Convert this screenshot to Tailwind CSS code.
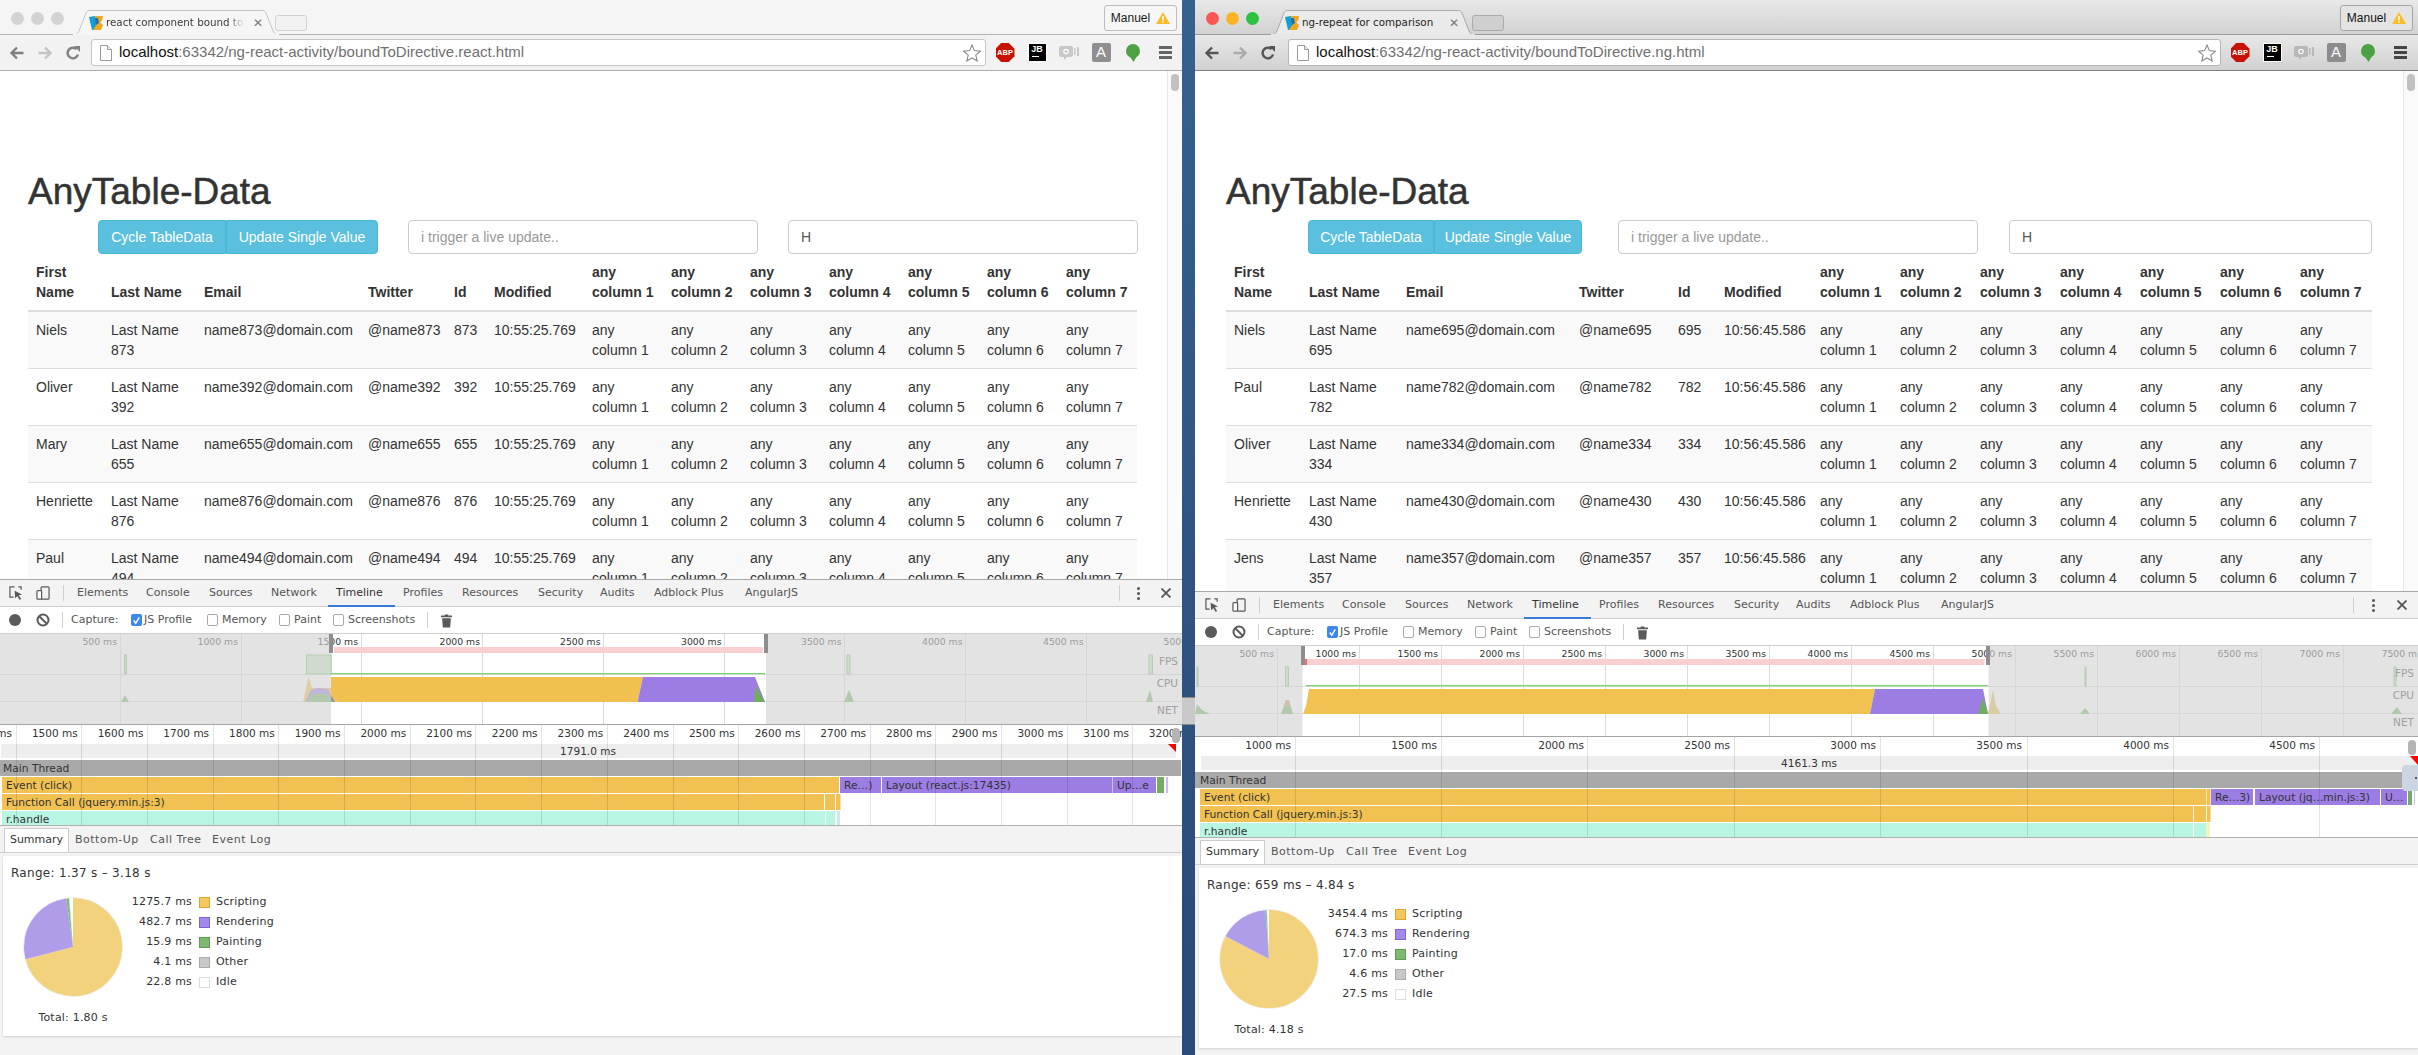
<!DOCTYPE html>
<html lang="en">
<head>
<meta charset="utf-8">
<title>Timeline comparison</title>
<script src="https://cdn.jsdelivr.net/npm/@tailwindcss/browser@4"></script>
</head>
<body class="overflow-hidden">
<svg class="absolute w-0 h-0" aria-hidden="true">
  <symbol id="fav" viewBox="0 0 14 14"><polygon points="0,1 6,0 8,7 8,13 3,14" fill="#12a0d4"/><polygon points="6,0 14,0 13,5 11,6 14,9 12,14 4,14 8,8" fill="#f0a81e"/><polygon points="6,2 9,2 10,7 7,9" fill="#1f6fb0"/></symbol>
  <symbol id="back" viewBox="0 0 16 16"><path d="M8 2.5 2.5 8 8 13.5M3 8h11.5" fill="none" stroke="currentColor" stroke-width="2.4"/></symbol>
  <symbol id="fwd" viewBox="0 0 16 16"><path d="M8 2.5 13.5 8 8 13.5M13 8H1.5" fill="none" stroke="currentColor" stroke-width="2.4"/></symbol>
  <symbol id="reload" viewBox="0 0 16 16"><path d="M13 9.5A5.3 5.3 0 1 1 11.6 4.2" fill="none" stroke="currentColor" stroke-width="2.4"/><polygon points="9,1 15,1 15,7" fill="currentColor"/></symbol>
  <symbol id="page" viewBox="0 0 12 16"><path d="M.5.5h7l4 4v11H.5z" fill="#fff" stroke="#9a9a9a"/><path d="M7.5.5v4h4" fill="#eee" stroke="#9a9a9a"/></symbol>
  <symbol id="star" viewBox="0 0 18 18"><polygon points="9,1 11.4,6.6 17.4,7.2 12.8,11.2 14.2,17 9,14 3.8,17 5.2,11.2 .6,7.2 6.6,6.6" fill="#fff" stroke="#8a8a8a" stroke-width="1.1"/></symbol>
  <symbol id="inspect" viewBox="0 0 15 15"><path d="M6 1H1v11h4" fill="none" stroke="#5a5a5a" stroke-width="1.3"/><path d="M10 1h3v3" fill="none" stroke="#5a5a5a" stroke-width="1.3"/><polygon points="6,5 14,9 10.5,10 13,14 11.5,15 9,11 6.5,13" fill="#5a5a5a"/></symbol>
  <symbol id="device" viewBox="0 0 15 15"><rect x="5.5" y="1" width="8.5" height="13" rx="1" fill="none" stroke="#5a5a5a" stroke-width="1.3"/><rect x="1" y="5" width="5" height="9" rx="1" fill="#fff" stroke="#5a5a5a" stroke-width="1.3"/></symbol>
  <symbol id="clear" viewBox="0 0 14 14"><circle cx="7" cy="7" r="5.5" fill="none" stroke="#5a5a5a" stroke-width="2"/><path d="M3 3l8 8" stroke="#5a5a5a" stroke-width="2"/></symbol>
  <symbol id="trash" viewBox="0 0 12 15"><path d="M4 1h4v1h4v2H0V2h4z" fill="#5a5a5a"/><path d="M1.2 5h9.6L10 15H2z" fill="#5a5a5a"/></symbol>
  <symbol id="warn" viewBox="0 0 14 12"><polygon points="7,0 14,12 0,12" fill="#fbbc2b"/><rect x="6.3" y="4" width="1.4" height="4.5" fill="#fff"/><rect x="6.3" y="9.4" width="1.4" height="1.4" fill="#fff"/></symbol>
  <symbol id="check" viewBox="0 0 12 12"><path d="M3 6l2.2 3L9 2.5" fill="none" stroke="#fff" stroke-width="1.6"/></symbol>
  <symbol id="balloon" viewBox="0 0 14 18"><circle cx="7" cy="7" r="7" fill="#4aa245"/><polygon points="3.500,12 11,12 7.500,18" fill="#4aa245"/></symbol>
  <symbol id="chat" viewBox="0 0 20 16"><path d="M2 1h10a2 2 0 0 1 2 2v7a2 2 0 0 1-2 2H8l-3 3v-3H2a2 2 0 0 1-2-2V3a2 2 0 0 1 2-2z" fill="currentColor"/><rect x="15" y="3" width="1.500" height="7" fill="currentColor"/><rect x="18" y="2" width="2" height="9" fill="currentColor"/><circle cx="7" cy="6.500" r="2.200" fill="none" stroke="#fff" stroke-width="1.200"/></symbol>
</svg>

<div class="flex w-[2418px] h-[1055px] bg-gradient-to-b from-[#35608f] to-[#2a4a78] font-['DejaVu_Sans',sans-serif]">

<!-- LEFT WINDOW -->
<div class="flex flex-col w-[1182px] h-full shrink-0 bg-white">
  <div class="flex items-end h-[35px] shrink-0 bg-[#f5f5f5] border-b border-[#b4b4b4]">
    <div class="flex gap-[7px] pl-[11px] w-[73px] self-start mt-[12px] shrink-0">
      <span class="w-[13px] h-[13px] rounded-full bg-[#d3d3d3]"></span><span class="w-[13px] h-[13px] rounded-full bg-[#d3d3d3]"></span><span class="w-[13px] h-[13px] rounded-full bg-[#d3d3d3]"></span>
    </div>
    <div class="relative flex items-center w-[206px] h-[25px] -mb-px pl-[16px] shrink-0">
      <svg class="absolute inset-0 w-full h-full" viewBox="0 0 206 25" preserveAspectRatio="none"><path d="M0 25c4 0 5-2 6-4L13 3c1-2 2-2.500 4-2.500h172c2 0 3 .5 4 2.500l7 18c1 2 2 4 6 4z" fill="#f6f6f6" stroke="#c4c4c4"/><path d="M0 24.500h206" stroke="#f6f6f6"/></svg>
      <svg class="relative w-[14px] h-[14px] shrink-0"><use href="#fav"/></svg>
      <span class="relative ml-[3px] w-[143px] whitespace-nowrap text-[10.300px] text-[#3a3a3a] [mask-image:linear-gradient(to_right,#000_85%,transparent_97%)]">react component bound to</span>
      <span class="relative ml-[4px] text-[12px] text-[#777]">✕</span>
    </div>
    <div class="w-[32px] h-[16px] mb-[3px] -ml-[4px] rounded-[3px] bg-[#f2f2f2] border border-[#d2d2d2] shrink-0"></div>
    <div class="flex items-center justify-center gap-[6px] ml-auto self-start mt-[5px] mr-[5px] w-[73px] h-[26px] rounded-[3px] border border-[#bdbdbd] bg-[#f6f6f6] font-['Liberation_Sans',sans-serif] text-[12px] text-[#1a1a1a]">
      <span>Manuel</span><svg class="w-[14px] h-[12px]"><use href="#warn"/></svg>
    </div>
  </div>
  <div class="flex items-center h-[36px] shrink-0 bg-[#f2f2f2] border-b border-[#ababab] pl-[3px]">
    <div class="flex justify-center w-[28px] text-[#808080]"><svg class="w-[16px] h-[16px]"><use href="#back"/></svg></div>
    <div class="flex justify-center w-[28px] text-[#c4c4c4]"><svg class="w-[16px] h-[16px]"><use href="#fwd"/></svg></div>
    <div class="flex justify-center w-[28px] text-[#808080]"><svg class="w-[16px] h-[16px]"><use href="#reload"/></svg></div>
    <div class="flex items-center w-[895px] h-[27px] ml-[4px] pl-[8px] pr-[4px] bg-white rounded-[3px] border border-[#c6c6c6] font-['Liberation_Sans',sans-serif] text-[15px]">
      <svg class="w-[12px] h-[16px] shrink-0"><use href="#page"/></svg>
      <span class="ml-[7px] text-[#111]">localhost</span><span class="text-[#707070]">:63342/ng-react-activity/boundToDirective.react.html</span>
      <svg class="ml-auto w-[18px] h-[18px]"><use href="#star"/></svg>
    </div>
    <div class="flex items-center ml-[3px]">
      <div class="flex justify-center w-[32px]"><span class="flex items-center justify-center w-[19px] h-[19px] bg-[#c81200] [clip-path:polygon(30%_0,70%_0,100%_30%,100%_70%,70%_100%,30%_100%,0_70%,0_30%)] text-white text-[7.500px] font-bold font-['Liberation_Sans',sans-serif]">ABP</span></div>
      <div class="flex justify-center w-[32px]"><span class="flex flex-col items-center justify-start w-[19px] h-[19px] bg-black border border-white text-white text-[9px] leading-[11px] font-bold font-['Liberation_Sans',sans-serif]">JB<i class="block w-[7px] h-px mt-[1px] -ml-[4px] bg-white"></i></span></div>
      <div class="flex justify-center w-[32px] text-[#c8c8c8]"><svg class="w-[20px] h-[16px]"><use href="#chat"/></svg></div>
      <div class="flex justify-center w-[32px]"><span class="flex items-center justify-center w-[19px] h-[19px] rounded-[2px] bg-[#8f8f8f] text-white text-[15px] font-['Liberation_Sans',sans-serif]">A</span></div>
      <div class="flex justify-center w-[32px]"><svg class="w-[14px] h-[18px]"><use href="#balloon"/></svg></div>
      <div class="flex flex-col items-center gap-[2px] w-[32px]"><i class="block w-[13px] h-[3px] bg-[#666]"></i><i class="block w-[13px] h-[3px] bg-[#666]"></i><i class="block w-[13px] h-[3px] bg-[#666]"></i></div>
    </div>
  </div>
  <div class="flex flex-1 min-h-0 overflow-hidden font-['Liberation_Sans',Arial,sans-serif] text-[14px] text-[#333]">
    <div class="flex-1 min-w-0 pl-[28px]">
      <h1 class="mt-[101px] mb-[8px] h-[40px] text-[37px] leading-[40px] font-medium text-[#333] [-webkit-text-stroke:0.5px_#333]">AnyTable-Data</h1>
      <div class="flex h-[34px]">
        <button class="ml-[70px] w-[128px] rounded-l-[4px] bg-[#5bc0de] border border-[#46b8da] text-white">Cycle TableData</button>
        <button class="w-[152px] rounded-r-[4px] bg-[#5bc0de] border border-[#46b8da] text-white">Update Single Value</button>
        <div class="flex items-center ml-[30px] w-[350px] px-[12px] rounded-[4px] border border-[#ccc] text-[#999]">i trigger a live update..</div>
        <div class="flex items-center ml-[30px] w-[350px] px-[12px] rounded-[4px] border border-[#ccc] text-[#555]">H</div>
      </div>
      <table class="table-fixed w-[1109px] leading-[20px] [&_th]:p-2 [&_th]:text-left [&_th]:align-bottom [&_th]:font-bold [&_th]:border-b-2 [&_th]:border-[#ddd] [&_td]:p-2 [&_td]:align-top [&_td]:border-t [&_td]:border-[#ddd] [&_tbody_tr:nth-child(odd)]:bg-[#f9f9f9]">
        <colgroup><col class="w-[75px]"><col class="w-[93px]"><col class="w-[164px]"><col class="w-[86px]"><col class="w-[40px]"><col class="w-[98px]"><col class="w-[79px]"><col class="w-[79px]"><col class="w-[79px]"><col class="w-[79px]"><col class="w-[79px]"><col class="w-[79px]"><col class="w-[79px]"></colgroup>
        <thead><tr><th>First Name</th><th>Last Name</th><th>Email</th><th>Twitter</th><th>Id</th><th>Modified</th><th>any column 1</th><th>any column 2</th><th>any column 3</th><th>any column 4</th><th>any column 5</th><th>any column 6</th><th>any column 7</th></tr></thead>
        <tbody>
          <tr><td>Niels</td><td>Last Name 873</td><td>name873@domain.com</td><td>@name873</td><td>873</td><td>10:55:25.769</td><td>any column 1</td><td>any column 2</td><td>any column 3</td><td>any column 4</td><td>any column 5</td><td>any column 6</td><td>any column 7</td></tr>
          <tr><td>Oliver</td><td>Last Name 392</td><td>name392@domain.com</td><td>@name392</td><td>392</td><td>10:55:25.769</td><td>any column 1</td><td>any column 2</td><td>any column 3</td><td>any column 4</td><td>any column 5</td><td>any column 6</td><td>any column 7</td></tr>
          <tr><td>Mary</td><td>Last Name 655</td><td>name655@domain.com</td><td>@name655</td><td>655</td><td>10:55:25.769</td><td>any column 1</td><td>any column 2</td><td>any column 3</td><td>any column 4</td><td>any column 5</td><td>any column 6</td><td>any column 7</td></tr>
          <tr><td>Henriette</td><td>Last Name 876</td><td>name876@domain.com</td><td>@name876</td><td>876</td><td>10:55:25.769</td><td>any column 1</td><td>any column 2</td><td>any column 3</td><td>any column 4</td><td>any column 5</td><td>any column 6</td><td>any column 7</td></tr>
          <tr><td>Paul</td><td>Last Name 494</td><td>name494@domain.com</td><td>@name494</td><td>494</td><td>10:55:25.769</td><td>any column 1</td><td>any column 2</td><td>any column 3</td><td>any column 4</td><td>any column 5</td><td>any column 6</td><td>any column 7</td></tr>
        </tbody>
      </table>
    </div>
    <div class="relative w-[15px] shrink-0 bg-[#fafafa] border-l border-[#e8e8e8]"><div class="w-[8px] h-[17px] ml-[3px] mt-[3px] rounded-full bg-[#c1c1c1]"></div></div>
  </div>
  <div class="h-[476px] shrink-0 bg-[#f3f3f3] border-t border-[#a8a8a8] text-[11px] text-[#555]">
    <div class="flex items-center h-[27px] border-b border-[#cfcfcf]">
      <svg class="ml-[9px] w-[14px] h-[14px]"><use href="#inspect"/></svg>
      <svg class="ml-[13px] w-[14px] h-[14px]"><use href="#device"/></svg>
      <i class="block ml-[13px] w-px h-[16px] bg-[#cfcfcf]"></i>
      <span class="ml-[13px] w-[69px]">Elements</span><span class="w-[63px]">Console</span><span class="w-[62px]">Sources</span><span class="w-[65px]">Network</span>
      <span class="relative w-[67px] h-full flex items-center text-[#333]">Timeline<i class="absolute left-[-8px] w-[67px] bottom-[-1px] h-[2px] bg-[#3879d9]"></i></span>
      <span class="w-[59px]">Profiles</span><span class="w-[76px]">Resources</span><span class="w-[62px]">Security</span><span class="w-[54px]">Audits</span><span class="w-[91px]">Adblock Plus</span><span>AngularJS</span>
      <i class="block ml-auto w-px h-[16px] bg-[#cfcfcf]"></i>
      <span class="ml-[17px] flex flex-col gap-[2px]"><i class="block w-[3px] h-[3px] rounded-full bg-[#555]"></i><i class="block w-[3px] h-[3px] rounded-full bg-[#555]"></i><i class="block w-[3px] h-[3px] rounded-full bg-[#555]"></i></span>
      <svg class="ml-[21px] mr-[11px] w-[10px] h-[10px]" viewBox="0 0 10 10"><path d="M.5.5l9 9M9.500.5l-9 9" stroke="#555" stroke-width="1.800"/></svg>
    </div>
    <div class="flex items-center h-[27px] bg-white border-b border-[#cfcfcf]">
      <span class="ml-[9px] w-[12px] h-[12px] rounded-full bg-[#5a5a5a]"></span>
      <svg class="ml-[15px] w-[14px] h-[14px]"><use href="#clear"/></svg>
      <i class="block ml-[12px] w-px h-[16px] bg-[#cfcfcf]"></i>
      <span class="ml-[8px] w-[60px]">Capture:</span>
      <span class="flex items-center justify-center w-[11px] h-[12px] rounded-[2px] bg-[#3b86f0]"><svg class="w-[11px] h-[11px]"><use href="#check"/></svg></span><span class="ml-[2px] w-[63px]">JS Profile</span>
      <span class="w-[11px] h-[12px] rounded-[2px] bg-white border border-[#aaa]"></span><span class="ml-[4px] w-[57px]">Memory</span>
      <span class="w-[11px] h-[12px] rounded-[2px] bg-white border border-[#aaa]"></span><span class="ml-[4px] w-[39px]">Paint</span>
      <span class="w-[11px] h-[12px] rounded-[2px] bg-white border border-[#aaa]"></span><span class="ml-[4px] w-[79px]">Screenshots</span>
      <i class="block w-px h-[16px] bg-[#cfcfcf]"></i>
      <svg class="ml-[13px] w-[11px] h-[15px]"><use href="#trash"/></svg>
    </div>
    <svg class="block w-[1182px] h-[90px] bg-white" viewBox="0 0 1182 90">
      <g stroke="#dcdcdc"><path d="M120.500 0v90M241.500 0v90M361.500 0v90M482.500 0v90M603.500 0v90M724.500 0v90M844.500 0v90M965.500 0v90M1086.500 0v90M0 40.500h1182M0 67.500h331M766 40.500h416M766 67.500h416"/></g>
      <g text-anchor="end" class="text-[9.300px] fill-[#333]"><text x="117" y="11">500 ms</text><text x="238" y="11">1000 ms</text><text x="358" y="11">1500 ms</text><text x="480" y="11">2000 ms</text><text x="600.500" y="11">2500 ms</text><text x="721.500" y="11">3000 ms</text><text x="841.500" y="11">3500 ms</text><text x="962.500" y="11">4000 ms</text><text x="1083.500" y="11">4500 ms</text><text x="1204" y="11">5000 ms</text></g>
      <rect x="334" y="13" width="429" height="6" fill="#f9cfcf"/>
      <path d="M331 39.700h434" stroke="#7fd077" stroke-width="1.200"/>
      <g fill="#c9e6c4" stroke="#7fc877"><rect x="124.500" y="21" width="2" height="19"/><rect x="306.500" y="21" width="24.500" height="19"/><rect x="847" y="21" width="3" height="19"/><rect x="1149" y="21" width="3.500" height="19"/></g>
      <polygon points="121,68 125,61 129,68" fill="#79b86e"/>
      <polygon points="303,68 308.500,43 312,54 332,54 336,68" fill="#f0c050"/><polygon points="305,68 311,56 318,54 328,55 335,68" fill="#9b7de4"/><polygon points="306,68 312,60 328,60 334,68" fill="#79b86e"/>
      <polygon points="844,68 849,56 854,68" fill="#79b86e"/><polygon points="1146,68 1150,56 1153,68" fill="#79b86e"/>
      <rect x="0" y="0" width="331" height="90" fill="#d3d3d3" opacity=".64"/><rect x="766" y="0" width="416" height="90" fill="#d3d3d3" opacity=".64"/>
      <polygon points="331,43 643,43 637.500,68 337,68 331,62" fill="#f0c050"/>
      <polygon points="643,43 755,43 765,68 637.500,68" fill="#9b7de4"/>
      <polygon points="754,68 756,52 765,68" fill="#6fae5c"/>
      <rect x="329" y="0" width="4" height="19" fill="#8e8e8e"/><rect x="764" y="0" width="4" height="19" fill="#8e8e8e"/>
      <g text-anchor="end" class="text-[10.500px] fill-[#a0a0a0]"><text x="1178" y="31">FPS</text><text x="1178" y="53">CPU</text><text x="1178" y="80">NET</text></g>
    </svg>
    <div class="h-px bg-[#a5a5a5]"></div>
    <svg class="block w-[1182px] h-[100px] bg-white" viewBox="0 0 1182 100">
      <g text-anchor="end" class="text-[10.500px] fill-[#333]"><text x="12" y="12">1400 ms</text><text x="77.700" y="12">1500 ms</text><text x="143.400" y="12">1600 ms</text><text x="209.100" y="12">1700 ms</text><text x="274.800" y="12">1800 ms</text><text x="340.500" y="12">1900 ms</text><text x="406.200" y="12">2000 ms</text><text x="471.900" y="12">2100 ms</text><text x="537.600" y="12">2200 ms</text><text x="603.300" y="12">2300 ms</text><text x="669" y="12">2400 ms</text><text x="734.700" y="12">2500 ms</text><text x="800.400" y="12">2600 ms</text><text x="866.100" y="12">2700 ms</text><text x="931.800" y="12">2800 ms</text><text x="997.500" y="12">2900 ms</text><text x="1063.200" y="12">3000 ms</text><text x="1128.900" y="12">3100 ms</text><text x="1194.600" y="12">3200 ms</text></g>
      <rect x="1" y="19" width="1175" height="14" fill="#eeeeee"/>
      <text x="588" y="30" text-anchor="middle" class="text-[10.500px] fill-[#333]">1791.0 ms</text>
      <rect x="0" y="35" width="1181" height="16" fill="#a9a9a9"/>
      <rect x="2" y="52" width="837" height="16" fill="#f1c152"/>
      <rect x="840" y="52" width="41" height="16" fill="#9b7de4"/><rect x="882" y="52" width="230.500" height="16" fill="#9b7de4"/><rect x="1113" y="52" width="43" height="16" fill="#9b7de4"/><rect x="1157" y="52" width="7" height="16" fill="#74ad62"/><rect x="1166" y="52" width="2" height="16" fill="#c9bdf0"/>
      <rect x="2" y="69" width="838.500" height="16" fill="#f1c152"/><path d="M824.500 69v16M835.500 69v16" stroke="#fff"/>
      <rect x="2" y="86" width="833" height="14" fill="#b8f5e3"/><rect x="837" y="86" width="3" height="14" fill="#c9ebf0"/><path d="M825.500 86v14" stroke="#fff"/>
      <g class="text-[10.700px] fill-[#333]"><text x="3" y="47">Main Thread</text><text x="6" y="64">Event (click)</text><text x="6" y="81">Function Call (jquery.min.js:3)</text><text x="6" y="98">r.handle</text><text x="844" y="64">Re…)</text><text x="886" y="64">Layout (react.js:17435)</text><text x="1117" y="64">Up…e</text></g>
      <path d="M16.500 0v100M81.500 0v100M147.500 0v100M213.500 0v100M278.500 0v100M344.500 0v100M410.500 0v100M475.500 0v100M541.500 0v100M607.500 0v100M673.500 0v100M738.500 0v100M804.500 0v100M870.500 0v100M935.500 0v100M1001.500 0v100M1067.500 0v100M1132.500 0v100" stroke="#000" stroke-opacity=".11"/>
      <polygon points="1168,19 1176,19 1176,27" fill="#f00"/>
      <rect x="1172" y="3" width="8" height="15" rx="4" fill="#b4b4b4"/>
    </svg>
    <div class="h-px bg-[#b0b0b0]"></div>
    <div class="flex items-end h-[26px] pl-[4px] text-[#555]">
      <span class="flex items-center justify-center w-[65px] h-[24px] bg-white border-x border-t border-[#ccc] text-[#333]">Summary</span>
      <span class="flex items-center ml-[6px] w-[75px] h-[24px] tracking-[.5px]">Bottom-Up</span><span class="flex items-center w-[62px] h-[24px] tracking-[.5px]">Call Tree</span><span class="flex items-center h-[24px] tracking-[.5px]">Event Log</span>
    </div>
    <div class="h-px bg-[#cfcfcf]"></div>
    <div class="ml-[3px] mt-[3px] h-[180px] bg-white shadow-[0_1px_2px_rgba(0,0,0,.15)] text-[#333] tracking-[.2px]">
      <div class="flex items-center h-[34px] pl-[8px] text-[12px] tracking-[.3px]">Range: 1.37 s – 3.18 s</div>
      <div class="flex items-start ml-[20px] mt-[2px]">
        <div class="w-[100px] mt-[5px] text-center">
          <svg class="block w-[100px] h-[100px]" viewBox="0 0 100 100"><circle cx="50" cy="50" r="49.500" fill="#fff" stroke="#eee"/><g fill="none" stroke-width="49" transform="rotate(-90 50 50)"><circle cx="50" cy="50" r="24.500" pathLength="100" stroke="#f3d27d" stroke-dasharray="70.900 100"/><circle cx="50" cy="50" r="24.500" pathLength="100" stroke="#b09dea" stroke-dasharray="26.800 100" stroke-dashoffset="-70.900"/><circle cx="50" cy="50" r="24.500" pathLength="100" stroke="#7fbf74" stroke-dasharray=".9 100" stroke-dashoffset="-97.700"/><circle cx="50" cy="50" r="24.500" pathLength="100" stroke="#ccc" stroke-dasharray=".2 100" stroke-dashoffset="-98.600"/></g></svg>
          <div class="mt-[13px]">Total: 1.80 s</div>
        </div>
        <div>
          <div class="flex items-center h-[20px]"><span class="w-[69px] text-right">1275.7 ms</span><i class="block ml-[7px] w-[11px] h-[11px] bg-[#f3c85e] border border-[#e0a52a]"></i><span class="ml-[6px]">Scripting</span></div>
          <div class="flex items-center h-[20px]"><span class="w-[69px] text-right">482.7 ms</span><i class="block ml-[7px] w-[11px] h-[11px] bg-[#a288e8] border border-[#8062d8]"></i><span class="ml-[6px]">Rendering</span></div>
          <div class="flex items-center h-[20px]"><span class="w-[69px] text-right">15.9 ms</span><i class="block ml-[7px] w-[11px] h-[11px] bg-[#7fb871] border border-[#5f9d50]"></i><span class="ml-[6px]">Painting</span></div>
          <div class="flex items-center h-[20px]"><span class="w-[69px] text-right">4.1 ms</span><i class="block ml-[7px] w-[11px] h-[11px] bg-[#c8c8c8] border border-[#aaa]"></i><span class="ml-[6px]">Other</span></div>
          <div class="flex items-center h-[20px]"><span class="w-[69px] text-right">22.8 ms</span><i class="block ml-[7px] w-[11px] h-[11px] bg-white border border-[#ddd]"></i><span class="ml-[6px]">Idle</span></div>
        </div>
      </div>
    </div>
  </div>
</div>

<!-- DESKTOP GAP -->
<div class="flex flex-col w-[13px] shrink-0 pt-[697px]"><div class="h-[28px] bg-[#c9c9c9] border-y border-[#8c8c8c]"></div></div>

<!-- RIGHT WINDOW -->
<div class="flex flex-col w-[1223px] h-full shrink-0 bg-white">
  <div class="flex items-end h-[35px] shrink-0 bg-gradient-to-b from-[#e8e8e8] to-[#d2d2d2] border-b border-[#9a9a9a]">
    <div class="flex gap-[7px] pl-[11px] w-[76px] self-start mt-[12px] shrink-0">
      <span class="w-[13px] h-[13px] rounded-full bg-[#fc5753]"></span><span class="w-[13px] h-[13px] rounded-full bg-[#fdb327]"></span><span class="w-[13px] h-[13px] rounded-full bg-[#2cc23f]"></span>
    </div>
    <div class="relative flex items-center w-[204px] h-[25px] -mb-px pl-[14px] shrink-0">
      <svg class="absolute inset-0 w-full h-full" viewBox="0 0 206 25" preserveAspectRatio="none"><path d="M0 25c4 0 5-2 6-4L13 3c1-2 2-2.500 4-2.500h172c2 0 3 .5 4 2.500l7 18c1 2 2 4 6 4z" fill="#eaeaea" stroke="#a8a8a8"/><path d="M0 24.500h206" stroke="#e8e8e8"/></svg>
      <svg class="relative w-[14px] h-[14px] shrink-0"><use href="#fav"/></svg>
      <span class="relative ml-[3px] w-[147px] whitespace-nowrap text-[10.300px] text-[#222]">ng-repeat for comparison</span>
      <span class="relative text-[12px] text-[#777]">✕</span>
    </div>
    <div class="w-[32px] h-[16px] mb-[3px] -ml-[3px] rounded-[3px] bg-[#cfcfcf] border border-[#aaa] shrink-0"></div>
    <div class="flex items-center justify-center gap-[6px] ml-auto self-start mt-[5px] mr-[5px] w-[73px] h-[26px] rounded-[3px] border border-[#a5a5a5] bg-[#e4e4e4] font-['Liberation_Sans',sans-serif] text-[12px] text-[#111]">
      <span>Manuel</span><svg class="w-[14px] h-[12px]"><use href="#warn"/></svg>
    </div>
  </div>
  <div class="flex items-center h-[36px] shrink-0 bg-gradient-to-b from-[#e8e8e8] to-[#d1d1d1] border-b border-[#808080] pl-[3px]">
    <div class="flex justify-center w-[28px] text-[#555]"><svg class="w-[16px] h-[16px]"><use href="#back"/></svg></div>
    <div class="flex justify-center w-[28px] text-[#aaa]"><svg class="w-[16px] h-[16px]"><use href="#fwd"/></svg></div>
    <div class="flex justify-center w-[28px] text-[#555]"><svg class="w-[16px] h-[16px]"><use href="#reload"/></svg></div>
    <div class="flex items-center w-[933px] h-[27px] ml-[6px] pl-[8px] pr-[4px] bg-white rounded-[3px] border border-[#b5b5b5] font-['Liberation_Sans',sans-serif] text-[15px]">
      <svg class="w-[12px] h-[16px] shrink-0"><use href="#page"/></svg>
      <span class="ml-[7px] text-[#111]">localhost</span><span class="text-[#707070]">:63342/ng-react-activity/boundToDirective.ng.html</span>
      <svg class="ml-auto w-[18px] h-[18px]"><use href="#star"/></svg>
    </div>
    <div class="flex items-center ml-[3px]">
      <div class="flex justify-center w-[32px]"><span class="flex items-center justify-center w-[19px] h-[19px] bg-[#c81200] [clip-path:polygon(30%_0,70%_0,100%_30%,100%_70%,70%_100%,30%_100%,0_70%,0_30%)] text-white text-[7.500px] font-bold font-['Liberation_Sans',sans-serif]">ABP</span></div>
      <div class="flex justify-center w-[32px]"><span class="flex flex-col items-center justify-start w-[19px] h-[19px] bg-black border border-white text-white text-[9px] leading-[11px] font-bold font-['Liberation_Sans',sans-serif]">JB<i class="block w-[7px] h-px mt-[1px] -ml-[4px] bg-white"></i></span></div>
      <div class="flex justify-center w-[32px] text-[#b8b8b8]"><svg class="w-[20px] h-[16px]"><use href="#chat"/></svg></div>
      <div class="flex justify-center w-[32px]"><span class="flex items-center justify-center w-[19px] h-[19px] rounded-[2px] bg-[#8c8c8c] text-white text-[15px] font-['Liberation_Sans',sans-serif]">A</span></div>
      <div class="flex justify-center w-[32px]"><svg class="w-[14px] h-[18px]"><use href="#balloon"/></svg></div>
      <div class="flex flex-col items-center gap-[2px] w-[32px]"><i class="block w-[13px] h-[3px] bg-[#444]"></i><i class="block w-[13px] h-[3px] bg-[#444]"></i><i class="block w-[13px] h-[3px] bg-[#444]"></i></div>
    </div>
  </div>
  <div class="flex flex-1 min-h-0 overflow-hidden font-['Liberation_Sans',Arial,sans-serif] text-[14px] text-[#333]">
    <div class="flex-1 min-w-0 pl-[31px]">
      <h1 class="mt-[101px] mb-[8px] h-[40px] text-[37px] leading-[40px] font-medium text-[#333] [-webkit-text-stroke:0.5px_#333]">AnyTable-Data</h1>
      <div class="flex h-[34px]">
        <button class="ml-[82px] w-[126px] rounded-l-[4px] bg-[#5bc0de] border border-[#46b8da] text-white">Cycle TableData</button>
        <button class="w-[148px] rounded-r-[4px] bg-[#5bc0de] border border-[#46b8da] text-white">Update Single Value</button>
        <div class="flex items-center ml-[36px] w-[360px] px-[12px] rounded-[4px] border border-[#ccc] text-[#999]">i trigger a live update..</div>
        <div class="flex items-center ml-[31px] w-[363px] px-[12px] rounded-[4px] border border-[#ccc] text-[#555]">H</div>
      </div>
      <table class="table-fixed w-[1146px] leading-[20px] [&_th]:p-2 [&_th]:text-left [&_th]:align-bottom [&_th]:font-bold [&_th]:border-b-2 [&_th]:border-[#ddd] [&_td]:p-2 [&_td]:align-top [&_td]:border-t [&_td]:border-[#ddd] [&_tbody_tr:nth-child(odd)]:bg-[#f9f9f9]">
        <colgroup><col class="w-[75px]"><col class="w-[97px]"><col class="w-[173px]"><col class="w-[99px]"><col class="w-[46px]"><col class="w-[96px]"><col class="w-[80px]"><col class="w-[80px]"><col class="w-[80px]"><col class="w-[80px]"><col class="w-[80px]"><col class="w-[80px]"><col class="w-[80px]"></colgroup>
        <thead><tr><th>First Name</th><th>Last Name</th><th>Email</th><th>Twitter</th><th>Id</th><th>Modified</th><th>any column 1</th><th>any column 2</th><th>any column 3</th><th>any column 4</th><th>any column 5</th><th>any column 6</th><th>any column 7</th></tr></thead>
        <tbody>
          <tr><td>Niels</td><td>Last Name 695</td><td>name695@domain.com</td><td>@name695</td><td>695</td><td>10:56:45.586</td><td>any column 1</td><td>any column 2</td><td>any column 3</td><td>any column 4</td><td>any column 5</td><td>any column 6</td><td>any column 7</td></tr>
          <tr><td>Paul</td><td>Last Name 782</td><td>name782@domain.com</td><td>@name782</td><td>782</td><td>10:56:45.586</td><td>any column 1</td><td>any column 2</td><td>any column 3</td><td>any column 4</td><td>any column 5</td><td>any column 6</td><td>any column 7</td></tr>
          <tr><td>Oliver</td><td>Last Name 334</td><td>name334@domain.com</td><td>@name334</td><td>334</td><td>10:56:45.586</td><td>any column 1</td><td>any column 2</td><td>any column 3</td><td>any column 4</td><td>any column 5</td><td>any column 6</td><td>any column 7</td></tr>
          <tr><td>Henriette</td><td>Last Name 430</td><td>name430@domain.com</td><td>@name430</td><td>430</td><td>10:56:45.586</td><td>any column 1</td><td>any column 2</td><td>any column 3</td><td>any column 4</td><td>any column 5</td><td>any column 6</td><td>any column 7</td></tr>
          <tr><td>Jens</td><td>Last Name 357</td><td>name357@domain.com</td><td>@name357</td><td>357</td><td>10:56:45.586</td><td>any column 1</td><td>any column 2</td><td>any column 3</td><td>any column 4</td><td>any column 5</td><td>any column 6</td><td>any column 7</td></tr>
        </tbody>
      </table>
    </div>
    <div class="relative w-[15px] shrink-0 bg-[#fafafa] border-l border-[#e8e8e8]"><div class="w-[8px] h-[17px] ml-[3px] mt-[3px] rounded-full bg-[#c1c1c1]"></div></div>
  </div>
  <div class="h-[464px] shrink-0 bg-[#f3f3f3] border-t border-[#a8a8a8] text-[11px] text-[#555]">
    <div class="flex items-center h-[27px] border-b border-[#cfcfcf]">
      <svg class="ml-[10px] w-[14px] h-[14px]"><use href="#inspect"/></svg>
      <svg class="ml-[13px] w-[14px] h-[14px]"><use href="#device"/></svg>
      <i class="block ml-[13px] w-px h-[16px] bg-[#cfcfcf]"></i>
      <span class="ml-[13px] w-[69px]">Elements</span><span class="w-[63px]">Console</span><span class="w-[62px]">Sources</span><span class="w-[65px]">Network</span>
      <span class="relative w-[67px] h-full flex items-center text-[#333]">Timeline<i class="absolute left-[-8px] w-[67px] bottom-[-1px] h-[2px] bg-[#3879d9]"></i></span>
      <span class="w-[59px]">Profiles</span><span class="w-[76px]">Resources</span><span class="w-[62px]">Security</span><span class="w-[54px]">Audits</span><span class="w-[91px]">Adblock Plus</span><span>AngularJS</span>
      <i class="block ml-auto w-px h-[16px] bg-[#cfcfcf]"></i>
      <span class="ml-[18px] flex flex-col gap-[2px]"><i class="block w-[3px] h-[3px] rounded-full bg-[#555]"></i><i class="block w-[3px] h-[3px] rounded-full bg-[#555]"></i><i class="block w-[3px] h-[3px] rounded-full bg-[#555]"></i></span>
      <svg class="ml-[22px] mr-[11px] w-[10px] h-[10px]" viewBox="0 0 10 10"><path d="M.5.5l9 9M9.500.5l-9 9" stroke="#555" stroke-width="1.800"/></svg>
    </div>
    <div class="flex items-center h-[27px] bg-white border-b border-[#cfcfcf]">
      <span class="ml-[10px] w-[12px] h-[12px] rounded-full bg-[#5a5a5a]"></span>
      <svg class="ml-[15px] w-[14px] h-[14px]"><use href="#clear"/></svg>
      <i class="block ml-[12px] w-px h-[16px] bg-[#cfcfcf]"></i>
      <span class="ml-[8px] w-[60px]">Capture:</span>
      <span class="flex items-center justify-center w-[11px] h-[12px] rounded-[2px] bg-[#3b86f0]"><svg class="w-[11px] h-[11px]"><use href="#check"/></svg></span><span class="ml-[2px] w-[63px]">JS Profile</span>
      <span class="w-[11px] h-[12px] rounded-[2px] bg-white border border-[#aaa]"></span><span class="ml-[4px] w-[57px]">Memory</span>
      <span class="w-[11px] h-[12px] rounded-[2px] bg-white border border-[#aaa]"></span><span class="ml-[4px] w-[39px]">Paint</span>
      <span class="w-[11px] h-[12px] rounded-[2px] bg-white border border-[#aaa]"></span><span class="ml-[4px] w-[79px]">Screenshots</span>
      <i class="block w-px h-[16px] bg-[#cfcfcf]"></i>
      <svg class="ml-[13px] w-[11px] h-[15px]"><use href="#trash"/></svg>
    </div>
    <svg class="block w-[1223px] h-[90px] bg-white" viewBox="1195 0 1223 90">
      <g stroke="#dcdcdc"><path d="M1277.500 0v90M1359.500 0v90M1441.500 0v90M1523.500 0v90M1605.500 0v90M1687.500 0v90M1769.500 0v90M1851.500 0v90M1933.500 0v90M2015.500 0v90M2097.500 0v90M2179.500 0v90M2261.500 0v90M2343.500 0v90M1195 40.500h1223M1195 67.500h108M1988 67.500h430"/></g>
      <g text-anchor="end" class="text-[9.300px] fill-[#333]"><text x="1274" y="11">500 ms</text><text x="1356" y="11">1000 ms</text><text x="1438" y="11">1500 ms</text><text x="1520" y="11">2000 ms</text><text x="1602" y="11">2500 ms</text><text x="1684" y="11">3000 ms</text><text x="1766" y="11">3500 ms</text><text x="1848" y="11">4000 ms</text><text x="1930" y="11">4500 ms</text><text x="2012" y="11">5000 ms</text><text x="2094" y="11">5500 ms</text><text x="2176" y="11">6000 ms</text><text x="2258" y="11">6500 ms</text><text x="2340" y="11">7000 ms</text><text x="2422" y="11">7500 ms</text></g>
      <rect x="1305.500" y="13" width="679" height="6" fill="#f9cfcf"/><rect x="1305.500" y="13" width="1" height="6" fill="#e00"/>
      <path d="M1306 39.700h682" stroke="#7fd077" stroke-width="1.200"/>
      <g fill="#c9e6c4" stroke="#7fc877"><rect x="1197" y="21" width="1" height="19"/><rect x="1285.500" y="21" width="3" height="19"/><rect x="2085" y="21" width="1" height="19"/><rect x="2394" y="21" width="2" height="19"/></g>
      <polygon points="1195,68 1197,58 1202,64 1210,68" fill="#79b86e"/>
      <polygon points="1281,68 1286,54 1289,54 1293,68" fill="#79b86e"/><polygon points="1284,60 1286,54 1289,54 1290,60" fill="#c9a05c"/>
      <polygon points="1988,68 1993,44 1996,60 2001,68" fill="#e8c060"/>
      <polygon points="2080,68 2085,62 2090,68" fill="#79b86e"/><polygon points="2391,68 2397,61 2402,68" fill="#79b86e"/>
      <rect x="1195" y="0" width="107.500" height="90" fill="#d3d3d3" opacity=".64"/><rect x="1988.500" y="0" width="430" height="90" fill="#d3d3d3" opacity=".64"/>
      <polygon points="1303,68 1306,60 1309,43 1875,43 1870,68" fill="#f1c152"/>
      <polygon points="1875,43 1983,43 1988,68 1870,68" fill="#9b7de4"/>
      <polygon points="1978,68 1983,52 1988,68" fill="#6fae5c"/>
      <rect x="1301" y="0" width="4" height="19" fill="#8e8e8e"/><rect x="1986" y="0" width="4" height="19" fill="#8e8e8e"/>
      <g text-anchor="end" class="text-[10.500px] fill-[#a0a0a0]"><text x="2414" y="31">FPS</text><text x="2414" y="53">CPU</text><text x="2414" y="80">NET</text></g>
    </svg>
    <div class="h-px bg-[#a5a5a5]"></div>
    <svg class="block w-[1223px] h-[100px] bg-white" viewBox="1195 0 1223 100">
      <g text-anchor="end" class="text-[10.500px] fill-[#333]"><text x="1291" y="12">1000 ms</text><text x="1437" y="12">1500 ms</text><text x="1584" y="12">2000 ms</text><text x="1730" y="12">2500 ms</text><text x="1876" y="12">3000 ms</text><text x="2022" y="12">3500 ms</text><text x="2169" y="12">4000 ms</text><text x="2315" y="12">4500 ms</text></g>
      <rect x="1201" y="19" width="1214" height="14" fill="#eeeeee"/>
      <text x="1809" y="30" text-anchor="middle" class="text-[10.500px] fill-[#333]">4161.3 ms</text>
      <rect x="1195" y="35" width="1223" height="16" fill="#a9a9a9"/>
      <rect x="1200" y="52" width="1006" height="16" fill="#f1c152"/><rect x="2206.500" y="52" width="4" height="16" fill="#f1c152"/>
      <rect x="2211" y="52" width="42" height="16" fill="#9b7de4"/><rect x="2255" y="52" width="125" height="16" fill="#9b7de4"/><rect x="2381" y="52" width="26" height="16" fill="#9b7de4"/><rect x="2408" y="52" width="4" height="16" fill="#74ad62"/><rect x="2414" y="52" width="1" height="16" fill="#c9bdf0"/>
      <rect x="1200" y="69" width="1010.500" height="16" fill="#f1c152"/><path d="M2193.500 69v16M2206.500 69v16" stroke="#fff" stroke-opacity=".8"/>
      <rect x="1200" y="86" width="1006" height="14" fill="#b8f5e3"/><rect x="2206" y="86" width="4" height="14" fill="#eff5c5"/><path d="M2193.500 86v14" stroke="#fff"/>
      <g class="text-[10.700px] fill-[#333]"><text x="1200" y="47">Main Thread</text><text x="1204" y="64">Event (click)</text><text x="1204" y="81">Function Call (jquery.min.js:3)</text><text x="1204" y="98">r.handle</text><text x="2215" y="64">Re…3)</text><text x="2259" y="64">Layout (jq…min.js:3)</text><text x="2385" y="64">U…</text></g>
      <path d="M1295.500 0v100M1441.500 0v100M1587.500 0v100M1734.500 0v100M1880.500 0v100M2027.500 0v100M2173.500 0v100M2319.500 0v100" stroke="#000" stroke-opacity=".11"/>
      <polygon points="2410,19 2418,19 2418,28" fill="#f00"/>
      <rect x="2408" y="3" width="8" height="15" rx="4" fill="#b4b4b4"/>
      <rect x="2402" y="28" width="20" height="26" rx="4" fill="#ccd6e3"/><circle cx="2416" cy="41" r="1" fill="#333"/>
    </svg>
    <div class="h-px bg-[#b0b0b0]"></div>
    <div class="flex items-end h-[26px] pl-[5px] text-[#555]">
      <span class="flex items-center justify-center w-[65px] h-[24px] bg-white border-x border-t border-[#ccc] text-[#333]">Summary</span>
      <span class="flex items-center ml-[6px] w-[75px] h-[24px] tracking-[.5px]">Bottom-Up</span><span class="flex items-center w-[62px] h-[24px] tracking-[.5px]">Call Tree</span><span class="flex items-center h-[24px] tracking-[.5px]">Event Log</span>
    </div>
    <div class="h-px bg-[#cfcfcf]"></div>
    <div class="ml-[4px] mt-[3px] h-[180px] bg-white shadow-[0_1px_2px_rgba(0,0,0,.15)] text-[#333] tracking-[.2px]">
      <div class="flex items-center h-[34px] pl-[8px] text-[12px] tracking-[.3px]">Range: 659 ms – 4.84 s</div>
      <div class="flex items-start ml-[20px] mt-[2px]">
        <div class="w-[100px] mt-[5px] text-center">
          <svg class="block w-[100px] h-[100px]" viewBox="0 0 100 100"><circle cx="50" cy="50" r="49.500" fill="#fff" stroke="#eee"/><g fill="none" stroke-width="49" transform="rotate(-90 50 50)"><circle cx="50" cy="50" r="24.500" pathLength="100" stroke="#f3d27d" stroke-dasharray="82.700 100"/><circle cx="50" cy="50" r="24.500" pathLength="100" stroke="#b09dea" stroke-dasharray="16.100 100" stroke-dashoffset="-82.700"/><circle cx="50" cy="50" r="24.500" pathLength="100" stroke="#7fbf74" stroke-dasharray=".4 100" stroke-dashoffset="-98.800"/><circle cx="50" cy="50" r="24.500" pathLength="100" stroke="#ccc" stroke-dasharray=".1 100" stroke-dashoffset="-99.200"/></g></svg>
          <div class="mt-[13px]">Total: 4.18 s</div>
        </div>
        <div>
          <div class="flex items-center h-[20px]"><span class="w-[69px] text-right">3454.4 ms</span><i class="block ml-[7px] w-[11px] h-[11px] bg-[#f3c85e] border border-[#e0a52a]"></i><span class="ml-[6px]">Scripting</span></div>
          <div class="flex items-center h-[20px]"><span class="w-[69px] text-right">674.3 ms</span><i class="block ml-[7px] w-[11px] h-[11px] bg-[#a288e8] border border-[#8062d8]"></i><span class="ml-[6px]">Rendering</span></div>
          <div class="flex items-center h-[20px]"><span class="w-[69px] text-right">17.0 ms</span><i class="block ml-[7px] w-[11px] h-[11px] bg-[#7fb871] border border-[#5f9d50]"></i><span class="ml-[6px]">Painting</span></div>
          <div class="flex items-center h-[20px]"><span class="w-[69px] text-right">4.6 ms</span><i class="block ml-[7px] w-[11px] h-[11px] bg-[#c8c8c8] border border-[#aaa]"></i><span class="ml-[6px]">Other</span></div>
          <div class="flex items-center h-[20px]"><span class="w-[69px] text-right">27.5 ms</span><i class="block ml-[7px] w-[11px] h-[11px] bg-white border border-[#ddd]"></i><span class="ml-[6px]">Idle</span></div>
        </div>
      </div>
    </div>
  </div>
</div>

</div>
</body>
</html>
